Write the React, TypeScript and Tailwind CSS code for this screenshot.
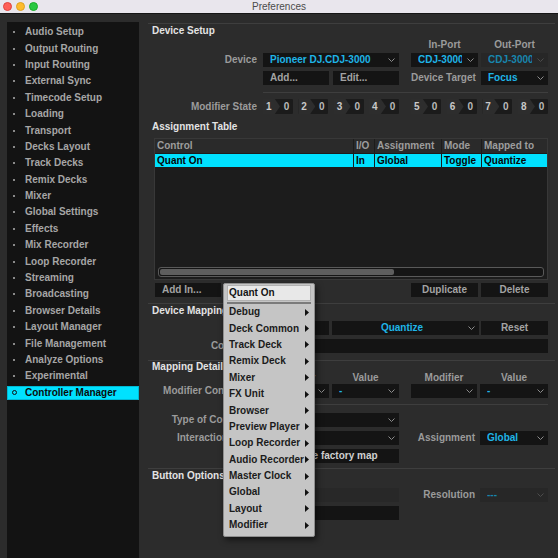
import React from 'react';

const sidebarItems = [
  'Audio Setup',
  'Output Routing',
  'Input Routing',
  'External Sync',
  'Timecode Setup',
  'Loading',
  'Transport',
  'Decks Layout',
  'Track Decks',
  'Remix Decks',
  'Mixer',
  'Global Settings',
  'Effects',
  'Mix Recorder',
  'Loop Recorder',
  'Streaming',
  'Broadcasting',
  'Browser Details',
  'Layout Manager',
  'File Management',
  'Analyze Options',
  'Experimental',
  'Controller Manager',
];

const menuItems = [
  'Debug',
  'Deck Common',
  'Track Deck',
  'Remix Deck',
  'Mixer',
  'FX Unit',
  'Browser',
  'Preview Player',
  'Loop Recorder',
  'Audio Recorder',
  'Master Clock',
  'Global',
  'Layout',
  'Modifier',
];

function Chevron({ dim }: { dim?: boolean }) {
  return (
    <svg width="7" height="4" viewBox="0 0 7 4" className="shrink-0">
      <path d="M0.5 0.5L3.5 3.5L6.5 0.5" fill="none" stroke={dim ? '#4c4c4c' : '#8c8c8c'} strokeWidth="1" />
    </svg>
  );
}

function Dropdown({
  value,
  w,
  center,
  dim,
  clip,
}: {
  value?: string;
  w: string;
  center?: boolean;
  dim?: boolean;
  clip?: boolean;
}) {
  return (
    <div className={`flex items-center h-[14px] ${w} ${dim ? 'bg-[#272727]' : 'bg-[#141414]'} pl-[7px] pr-[4px] gap-[3px]`}>
      <span
        className={`flex-1 min-w-0 overflow-hidden whitespace-nowrap leading-none ${center ? 'text-center' : ''} ${
          dim ? 'text-[#1886ae]' : 'text-[#1fb5e8]'
        }`}
      >
        {clip ? <span className="inline-block max-w-[44px] overflow-hidden align-bottom">{value}</span> : value}
      </span>
      <Chevron dim={dim} />
    </div>
  );
}

function Btn({ text, w, left }: { text: string; w: string; left?: boolean }) {
  return (
    <div className={`flex items-center h-[14px] ${w} bg-[#141414] text-[#a3a3a3] leading-none ${left ? 'pl-[7px]' : 'justify-center'}`}>
      {text}
    </div>
  );
}

function Field({ w, children, dim }: { w: string; children?: React.ReactNode; dim?: boolean }) {
  return (
    <div className={`flex items-center h-[14px] ${w} ${dim ? 'bg-[#282828]' : 'bg-[#141414]'} pl-[3px] text-[#d0d0d0] leading-none whitespace-nowrap overflow-hidden`}>
      {children}
    </div>
  );
}

function Row({ label, mt, h = 'h-[14px]', children }: { label?: string; mt: string; h?: string; children?: React.ReactNode }) {
  return (
    <div className={`flex items-center ${h} ${mt}`}>
      <div className="w-[109px] text-right text-[#9b9b9b] whitespace-nowrap overflow-hidden leading-none">{label}</div>
      <div className="ml-[6px] flex items-center h-full">{children}</div>
    </div>
  );
}

function Header({ text, h = 'h-[13px]' }: { text: string; h?: string }) {
  return <div className={`${h} flex items-center pl-[4px] text-[#e3e3e3] leading-none`}>{text}</div>;
}

function ModCell({ n }: { n: number }) {
  return (
    <div className="flex h-[15px] w-[30px] bg-[#1b1b1b] rounded-[1px]">
      <div className="w-[17px] h-full bg-[#2d2d2d] [clip-path:polygon(0_0,70%_0,100%_50%,70%_100%,0_100%)] flex items-center pl-[3px] text-[#c9c9c9] leading-none">
        {n}
      </div>
      <div className="flex-1 flex items-center justify-center text-[#b9b9b9] leading-none">0</div>
    </div>
  );
}

function Label({ text, w, center }: { text: string; w: string; center?: boolean }) {
  return (
    <div className={`${w} text-[#9b9b9b] leading-none whitespace-nowrap ${center ? 'text-center' : 'text-right pr-[3px]'}`}>{text}</div>
  );
}

const cols = 'grid grid-cols-[198px_20px_66px_39px_1fr] gap-x-[1px]';

export default function App() {
  return (
    <div className="w-[558px] h-[558px] overflow-hidden relative bg-[#2c2c2c] font-['Liberation_Sans',Arial,sans-serif] text-[10px] font-bold select-none">
      {/* title bar */}
      <div className="h-[14px] bg-[#e9e6ed] border-b border-[#161616] grid grid-cols-[1fr_auto_1fr] items-center">
        <div className="flex items-center gap-[4px] pl-[2.5px]">
          <div className="w-[9px] h-[9px] rounded-full bg-[#fe5f57] border border-[#e0443e]" />
          <div className="w-[9px] h-[9px] rounded-full bg-[#febc2e] border border-[#dea123]" />
          <div className="w-[9px] h-[9px] rounded-full bg-[#28c840] border border-[#1aab29]" />
        </div>
        <div className="text-[#4b4b4b] font-normal text-[10px] leading-none">Preferences</div>
        <div />
      </div>

      <div className="flex h-[544px]">
        {/* sidebar */}
        <div className="w-[140px] pt-[8px] pl-[7px] h-full">
          <div className="w-[132px] h-full bg-[#131313] pt-[2px]">
            {sidebarItems.map((item) =>
              item === 'Controller Manager' ? (
                <div key={item} className="h-[16.4px] flex items-center">
                  <div className="h-[14px] w-full bg-[#00e1ff] border border-[#00b9d4] flex items-center">
                    <div className="ml-[4px] w-[5px] h-[5px] rounded-full border border-[#111]" />
                    <span className="ml-[8px] text-[#0b0b0b] leading-none">{item}</span>
                  </div>
                </div>
              ) : (
                <div key={item} className="h-[16.4px] flex items-center">
                  <div className="ml-[6px] w-[2px] h-[2px] bg-[#8a8a8a]" />
                  <span className="ml-[10px] text-[#a6a6a6] leading-none">{item}</span>
                </div>
              )
            )}
          </div>
        </div>

        {/* main */}
        <div className="w-[418px] pt-[9px]">
          <div className="ml-[8px] mr-[3px]">
            {/* Device Setup */}
            <section className="border-t border-[#3e3e3e]">
              <Header text="Device Setup" />
              <Row mt="mt-[2px]" h="h-[12px]">
                <div className="w-[136px]" />
                <div className="ml-[12px] w-[67px] text-center text-[#9b9b9b] leading-none">In-Port</div>
                <div className="ml-[3px] w-[67px] text-center text-[#9b9b9b] leading-none">Out-Port</div>
              </Row>
              <Row label="Device" mt="mt-[2px]">
                <Dropdown value="Pioneer DJ.CDJ-3000" w="w-[136px]" />
                <div className="ml-[12px]">
                  <Dropdown value="CDJ-3000" w="w-[67px]" clip />
                </div>
                <div className="ml-[3px]">
                  <Dropdown value="CDJ-3000" w="w-[67px]" dim clip />
                </div>
              </Row>
              <Row mt="mt-[4px]">
                <Btn text="Add..." w="w-[66px]" left />
                <div className="ml-[4px]">
                  <Btn text="Edit..." w="w-[66px]" left />
                </div>
                <div className="ml-[12px]">
                  <Label text="Device Target" w="w-[67px]" />
                </div>
                <div className="ml-[3px]">
                  <Dropdown value="Focus" w="w-[67px]" />
                </div>
              </Row>
              <div className="mt-[7px] ml-[115px] w-[285px] h-[1px] bg-[#3e3e3e]" />
              <Row label="Modifier State" mt="mt-[6px]" h="h-[15px]">
                <div className="w-[136px] flex justify-between">
                  {[1, 2, 3, 4].map((n) => (
                    <ModCell key={n} n={n} />
                  ))}
                </div>
                <div className="ml-[12px] w-[137px] flex justify-between">
                  {[5, 6, 7, 8].map((n) => (
                    <ModCell key={n} n={n} />
                  ))}
                </div>
              </Row>
              <div className="mt-[6px]">
                <Header text="Assignment Table" />
              </div>

              {/* table */}
              <div className="ml-[6px] mt-[5px] w-[394px] h-[142px] bg-[#1c1c1c] border border-[#383838] flex flex-col">
                <div className={`${cols} h-[14px]`}>
                  {['Control', 'I/O', 'Assignment', 'Mode', 'Mapped to'].map((c) => (
                    <div key={c} className="bg-[#2a2a2a] text-[#9d9d9d] flex items-center pl-[2px] leading-none whitespace-nowrap overflow-hidden">
                      {c}
                    </div>
                  ))}
                </div>
                <div className={`${cols} h-[13px] mt-[1px]`}>
                  {['Quant On', 'In', 'Global', 'Toggle', 'Quantize'].map((c) => (
                    <div key={c} className="bg-[#00e1ff] text-[#060606] flex items-center pl-[2px] leading-none whitespace-nowrap overflow-hidden">
                      {c}
                    </div>
                  ))}
                </div>
                <div className="flex-1" />
                <div className="mx-[3px] mb-[2px] h-[10px] rounded-[3px] border border-[#595959] bg-[#151515] p-[1px]">
                  <div className="w-[234px] h-full rounded-[2px] bg-[#5e5e5e]" />
                </div>
              </div>

              <div className="flex items-center h-[14px] mt-[3px]">
                <div className="ml-[7px]">
                  <Btn text="Add In..." w="w-[66px]" left />
                </div>
                <div className="ml-[190px]">
                  <Btn text="Duplicate" w="w-[67px]" />
                </div>
                <div className="ml-[3px]">
                  <Btn text="Delete" w="w-[67px]" />
                </div>
              </div>
            </section>

            {/* Device Mapping */}
            <section className="mt-[6px] border-t border-[#3e3e3e]">
              <Header text="Device Mapping" h="h-[14px]" />
              <Row mt="mt-[3px]">
                <Btn text="Learn" w="w-[66px]" />
                <div className="ml-[3px]">
                  <Dropdown value="Quantize" w="w-[147px]" center />
                </div>
                <div className="ml-[2px]">
                  <Btn text="Reset" w="w-[67px]" />
                </div>
              </Row>
              <Row label="Comment" mt="mt-[4px]">
                <Field w="w-[285px]" />
              </Row>
            </section>

            {/* Mapping Details */}
            <section className="mt-[7px] border-t border-[#3e3e3e]">
              <Header text="Mapping Details" h="h-[12px]" />
              <Row mt="mt-0" h="h-[9px]">
                <Label text="Modifier" w="w-[66px]" center />
                <div className="ml-[3px]">
                  <Label text="Value" w="w-[67px]" center />
                </div>
                <div className="ml-[12px]">
                  <Label text="Modifier" w="w-[66px]" center />
                </div>
                <div className="ml-[3px]">
                  <Label text="Value" w="w-[68px]" center />
                </div>
              </Row>
              <Row label="Modifier Conditions" mt="mt-[2px]">
                <Dropdown w="w-[66px]" />
                <div className="ml-[3px]">
                  <Dropdown value="-" w="w-[67px]" />
                </div>
                <div className="ml-[12px]">
                  <Dropdown w="w-[66px]" />
                </div>
                <div className="ml-[3px]">
                  <Dropdown value="-" w="w-[68px]" />
                </div>
              </Row>
              <div className="mt-[6px] ml-[115px] w-[285px] h-[1px] bg-[#3e3e3e]" />
              <Row label="Type of Controller" mt="mt-[8px]">
                <Dropdown value="Button" w="w-[136px]" />
              </Row>
              <Row label="Interaction Mode" mt="mt-[4px]">
                <Dropdown value="Toggle" w="w-[136px]" />
                <div className="ml-[12px]">
                  <Label text="Assignment" w="w-[67px]" />
                </div>
                <div className="ml-[2px]">
                  <Dropdown value="Global" w="w-[68px]" />
                </div>
              </Row>
              <Row mt="mt-[4px]">
                <Field w="w-[136px]">
                  <div className="w-[8px] h-[8px] border border-[#5a5a5a] bg-[#1e1e1e] shrink-0" />
                  <span className="ml-[3px]">Override factory map</span>
                </Field>
              </Row>
            </section>

            {/* Button Options */}
            <section className="mt-[5px] border-t border-[#3e3e3e]">
              <Header text="Button Options" h="h-[14px]" />
              <Row mt="mt-[5px]">
                <Field w="w-[136px]" dim />
                <div className="ml-[12px]">
                  <Label text="Resolution" w="w-[67px]" />
                </div>
                <div className="ml-[2px]">
                  <Dropdown value="---" w="w-[68px]" dim />
                </div>
              </Row>
              <Row mt="mt-[4px]">
                <Field w="w-[136px]" />
              </Row>
            </section>
          </div>
        </div>
      </div>

      {/* context menu */}
      <div className="absolute left-[223px] top-[283px] w-[92px] h-[254px] bg-[#c5c5c5] border border-[#8e8e8e] rounded-[2px] shadow-[2px_3px_6px_rgba(0,0,0,0.55)]">
        <div className="mx-[3px] mt-[1px] h-[16px] bg-[#e8e8e8] border border-[#b2b2b2] flex items-center pl-[1px] text-[#151515] leading-none">
          Quant On
        </div>
        <div className="mx-[3px] mt-[1px] h-[2px] bg-[#7b7b7b]" />
        {menuItems.map((m) => (
          <div key={m} className="h-[16.4px] flex items-center justify-between pl-[5px] pr-[5px] text-[#1b1b1b] leading-none whitespace-nowrap">
            <span>{m}</span>
            <svg width="4" height="7" viewBox="0 0 4 7" className="shrink-0">
              <polygon points="0,0 4,3.5 0,7" fill="#111" />
            </svg>
          </div>
        ))}
      </div>
    </div>
  );
}
